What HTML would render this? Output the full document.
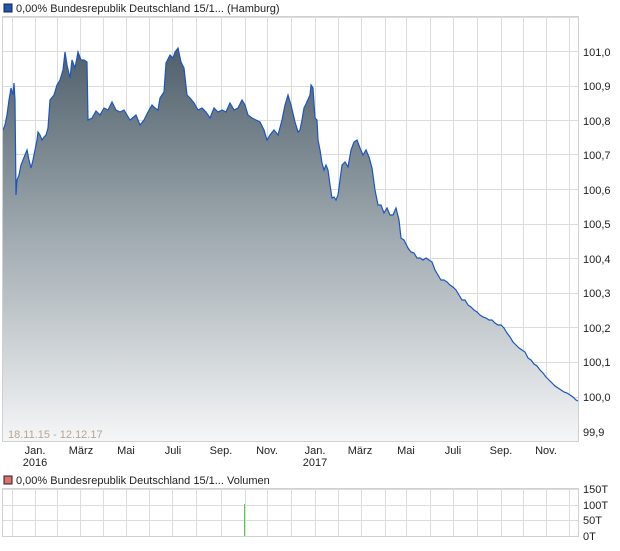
<!DOCTYPE html>
<html><head><meta charset="utf-8"><style>
body{margin:0;background:#fff;width:620px;height:546px;overflow:hidden;font-family:"Liberation Sans",sans-serif;}
svg text{font-family:"Liberation Sans",sans-serif;font-size:11px;fill:#222;}
</style></head><body>
<svg width="620" height="546" viewBox="0 0 620 546">
<defs><linearGradient id="g" gradientUnits="userSpaceOnUse" x1="0" y1="48" x2="0" y2="441">
<stop offset="0" stop-color="#4f5f6a"/><stop offset="0.5" stop-color="#a3adb3"/><stop offset="1" stop-color="#f5f6f7"/></linearGradient></defs>
<rect x="4" y="4" width="8" height="8" fill="#1e56b8" stroke="#222" stroke-width="1"/>
<text x="16" y="12">0,00% Bundesrepublik Deutschland 15/1... (Hamburg)</text>
<g stroke="#dcdcdc" stroke-width="1">
<line x1="3" y1="17.5" x2="578" y2="17.5"/><line x1="3" y1="51.5" x2="578" y2="51.5"/><line x1="3" y1="86.5" x2="578" y2="86.5"/><line x1="3" y1="120.5" x2="578" y2="120.5"/><line x1="3" y1="154.5" x2="578" y2="154.5"/><line x1="3" y1="189.5" x2="578" y2="189.5"/><line x1="3" y1="224.5" x2="578" y2="224.5"/><line x1="3" y1="258.5" x2="578" y2="258.5"/><line x1="3" y1="293.5" x2="578" y2="293.5"/><line x1="3" y1="327.5" x2="578" y2="327.5"/><line x1="3" y1="362.5" x2="578" y2="362.5"/><line x1="3" y1="397.5" x2="578" y2="397.5"/><line x1="3" y1="431.5" x2="578" y2="431.5"/>
<line x1="12.5" y1="17" x2="12.5" y2="441"/><line x1="35.5" y1="17" x2="35.5" y2="441"/><line x1="57.5" y1="17" x2="57.5" y2="441"/><line x1="80.5" y1="17" x2="80.5" y2="441"/><line x1="103.5" y1="17" x2="103.5" y2="441"/><line x1="126.5" y1="17" x2="126.5" y2="441"/><line x1="149.5" y1="17" x2="149.5" y2="441"/><line x1="172.5" y1="17" x2="172.5" y2="441"/><line x1="196.5" y1="17" x2="196.5" y2="441"/><line x1="221.5" y1="17" x2="221.5" y2="441"/><line x1="245.5" y1="17" x2="245.5" y2="441"/><line x1="267.5" y1="17" x2="267.5" y2="441"/><line x1="291.5" y1="17" x2="291.5" y2="441"/><line x1="315.5" y1="17" x2="315.5" y2="441"/><line x1="338.5" y1="17" x2="338.5" y2="441"/><line x1="361.5" y1="17" x2="361.5" y2="441"/><line x1="385.5" y1="17" x2="385.5" y2="441"/><line x1="406.5" y1="17" x2="406.5" y2="441"/><line x1="430.5" y1="17" x2="430.5" y2="441"/><line x1="453.5" y1="17" x2="453.5" y2="441"/><line x1="477.5" y1="17" x2="477.5" y2="441"/><line x1="501.5" y1="17" x2="501.5" y2="441"/><line x1="523.5" y1="17" x2="523.5" y2="441"/><line x1="546.5" y1="17" x2="546.5" y2="441"/><line x1="569.5" y1="17" x2="569.5" y2="441"/>
</g>
<path fill="url(#g)" stroke="none" d="M3,441 L3,130 5,125 7,115 9,100 11,88 13,95 14,83 15,100 16,195 17,180 19,175 21,165 23,160 25,155 27,150 29,160 31,168 33,160 35,150 37,140 38,132 40,135 42,140 44,137 46,135 48,128 50,100 54,95 57,85 60,80 63,70 65,52 67,65 70,78 72,60 75,68 78,52 81,60 84,60 87,62 88,120 92,118 96,111 100,115 104,108 108,110 112,102 116,110 120,112 124,110 130,120 136,115 140,125 144,120 148,112 152,105 155,108 158,110 160,98 162,95 164,92 166,63 170,55 173,58 175,52 178,48 181,62 184,68 187,95 190,98 194,103 198,110 202,108 206,112 210,118 214,108 218,112 222,110 226,112 230,103 234,110 238,108 242,100 245,105 248,115 252,118 256,120 260,122 264,130 267,140 270,135 274,130 278,135 282,120 285,105 288,95 291,105 295,122 298,132 300,130 302,120 304,108 306,104 310,95 311,85 313,88 315,118 317,120 318,140 320,150 322,163 324,170 326,165 328,170 330,185 332,198 334,197 336,200 338,195 340,180 342,165 345,162 348,167 351,150 354,142 357,140 360,148 363,155 366,150 369,157 372,168 375,190 378,205 381,205 384,213 387,208 390,215 393,215 396,208 399,220 401,238 404,240 408,248 411,252 414,253 417,258 420,258 423,260 426,258 429,260 432,262 435,270 438,275 441,280 444,280 447,282 450,285 453,287 456,290 459,295 462,300 465,300 468,305 471,307 474,310 477,312 480,315 483,317 486,318 489,320 492,320 495,323 498,325 501,325 504,328 507,333 510,337 513,342 516,345 519,348 522,350 525,352 528,358 531,360 534,364 537,366 540,370 543,373 546,377 549,380 552,383 555,386 558,388 561,390 564,392 567,393 570,395 573,397 576,400 L578,401 L578,441 Z"/>
<path fill="none" stroke="#1d55c0" stroke-width="1.2" d="M3,130 5,125 7,115 9,100 11,88 13,95 14,83 15,100 16,195 17,180 19,175 21,165 23,160 25,155 27,150 29,160 31,168 33,160 35,150 37,140 38,132 40,135 42,140 44,137 46,135 48,128 50,100 54,95 57,85 60,80 63,70 65,52 67,65 70,78 72,60 75,68 78,52 81,60 84,60 87,62 88,120 92,118 96,111 100,115 104,108 108,110 112,102 116,110 120,112 124,110 130,120 136,115 140,125 144,120 148,112 152,105 155,108 158,110 160,98 162,95 164,92 166,63 170,55 173,58 175,52 178,48 181,62 184,68 187,95 190,98 194,103 198,110 202,108 206,112 210,118 214,108 218,112 222,110 226,112 230,103 234,110 238,108 242,100 245,105 248,115 252,118 256,120 260,122 264,130 267,140 270,135 274,130 278,135 282,120 285,105 288,95 291,105 295,122 298,132 300,130 302,120 304,108 306,104 310,95 311,85 313,88 315,118 317,120 318,140 320,150 322,163 324,170 326,165 328,170 330,185 332,198 334,197 336,200 338,195 340,180 342,165 345,162 348,167 351,150 354,142 357,140 360,148 363,155 366,150 369,157 372,168 375,190 378,205 381,205 384,213 387,208 390,215 393,215 396,208 399,220 401,238 404,240 408,248 411,252 414,253 417,258 420,258 423,260 426,258 429,260 432,262 435,270 438,275 441,280 444,280 447,282 450,285 453,287 456,290 459,295 462,300 465,300 468,305 471,307 474,310 477,312 480,315 483,317 486,318 489,320 492,320 495,323 498,325 501,325 504,328 507,333 510,337 513,342 516,345 519,348 522,350 525,352 528,358 531,360 534,364 537,366 540,370 543,373 546,377 549,380 552,383 555,386 558,388 561,390 564,392 567,393 570,395 573,397 576,400 578,401"/>
<rect x="2.5" y="16.5" width="576" height="425" fill="none" stroke="#d0d0d0"/>
<text x="8" y="438" style="fill:#b8a690">18.11.15 - 12.12.17</text>
<g>
<text x="583" y="56">101,0</text><text x="583" y="90">100,9</text><text x="583" y="125">100,8</text><text x="583" y="159">100,7</text><text x="583" y="194">100,6</text><text x="583" y="228">100,5</text><text x="583" y="263">100,4</text><text x="583" y="297">100,3</text><text x="583" y="332">100,2</text><text x="583" y="366">100,1</text><text x="583" y="401">100,0</text><text x="583" y="436">99,9</text>
</g>
<g text-anchor="middle">
<text x="35" y="454">Jan.</text><text x="35" y="466">2016</text><text x="81" y="454">März</text><text x="126" y="454">Mai</text><text x="173" y="454">Juli</text><text x="221" y="454">Sep.</text><text x="267" y="454">Nov.</text><text x="315" y="454">Jan.</text><text x="315" y="466">2017</text><text x="360" y="454">März</text><text x="406" y="454">Mai</text><text x="453" y="454">Juli</text><text x="501" y="454">Sep.</text><text x="546" y="454">Nov.</text>
</g>
<rect x="4" y="476" width="8" height="8" fill="#e07070" stroke="#222" stroke-width="1"/>
<text x="16" y="484">0,00% Bundesrepublik Deutschland 15/1... Volumen</text>
<g stroke="#dcdcdc" stroke-width="1">
<line x1="3" y1="489.5" x2="578" y2="489.5"/><line x1="3" y1="505.5" x2="578" y2="505.5"/><line x1="3" y1="520.5" x2="578" y2="520.5"/>
<line x1="12.5" y1="489" x2="12.5" y2="536"/><line x1="35.5" y1="489" x2="35.5" y2="536"/><line x1="57.5" y1="489" x2="57.5" y2="536"/><line x1="80.5" y1="489" x2="80.5" y2="536"/><line x1="103.5" y1="489" x2="103.5" y2="536"/><line x1="126.5" y1="489" x2="126.5" y2="536"/><line x1="149.5" y1="489" x2="149.5" y2="536"/><line x1="172.5" y1="489" x2="172.5" y2="536"/><line x1="196.5" y1="489" x2="196.5" y2="536"/><line x1="221.5" y1="489" x2="221.5" y2="536"/><line x1="245.5" y1="489" x2="245.5" y2="536"/><line x1="267.5" y1="489" x2="267.5" y2="536"/><line x1="291.5" y1="489" x2="291.5" y2="536"/><line x1="315.5" y1="489" x2="315.5" y2="536"/><line x1="338.5" y1="489" x2="338.5" y2="536"/><line x1="361.5" y1="489" x2="361.5" y2="536"/><line x1="385.5" y1="489" x2="385.5" y2="536"/><line x1="406.5" y1="489" x2="406.5" y2="536"/><line x1="430.5" y1="489" x2="430.5" y2="536"/><line x1="453.5" y1="489" x2="453.5" y2="536"/><line x1="477.5" y1="489" x2="477.5" y2="536"/><line x1="501.5" y1="489" x2="501.5" y2="536"/><line x1="523.5" y1="489" x2="523.5" y2="536"/><line x1="546.5" y1="489" x2="546.5" y2="536"/><line x1="569.5" y1="489" x2="569.5" y2="536"/>
</g>
<rect x="2.5" y="488.5" width="576" height="48" fill="none" stroke="#d0d0d0"/>
<line x1="244.5" y1="504" x2="244.5" y2="536" stroke="#4fd04f" stroke-width="1"/>
<text x="583" y="493">150T</text><text x="583" y="509">100T</text><text x="583" y="524">50T</text><text x="583" y="540">0T</text>
</svg>
</body></html>
